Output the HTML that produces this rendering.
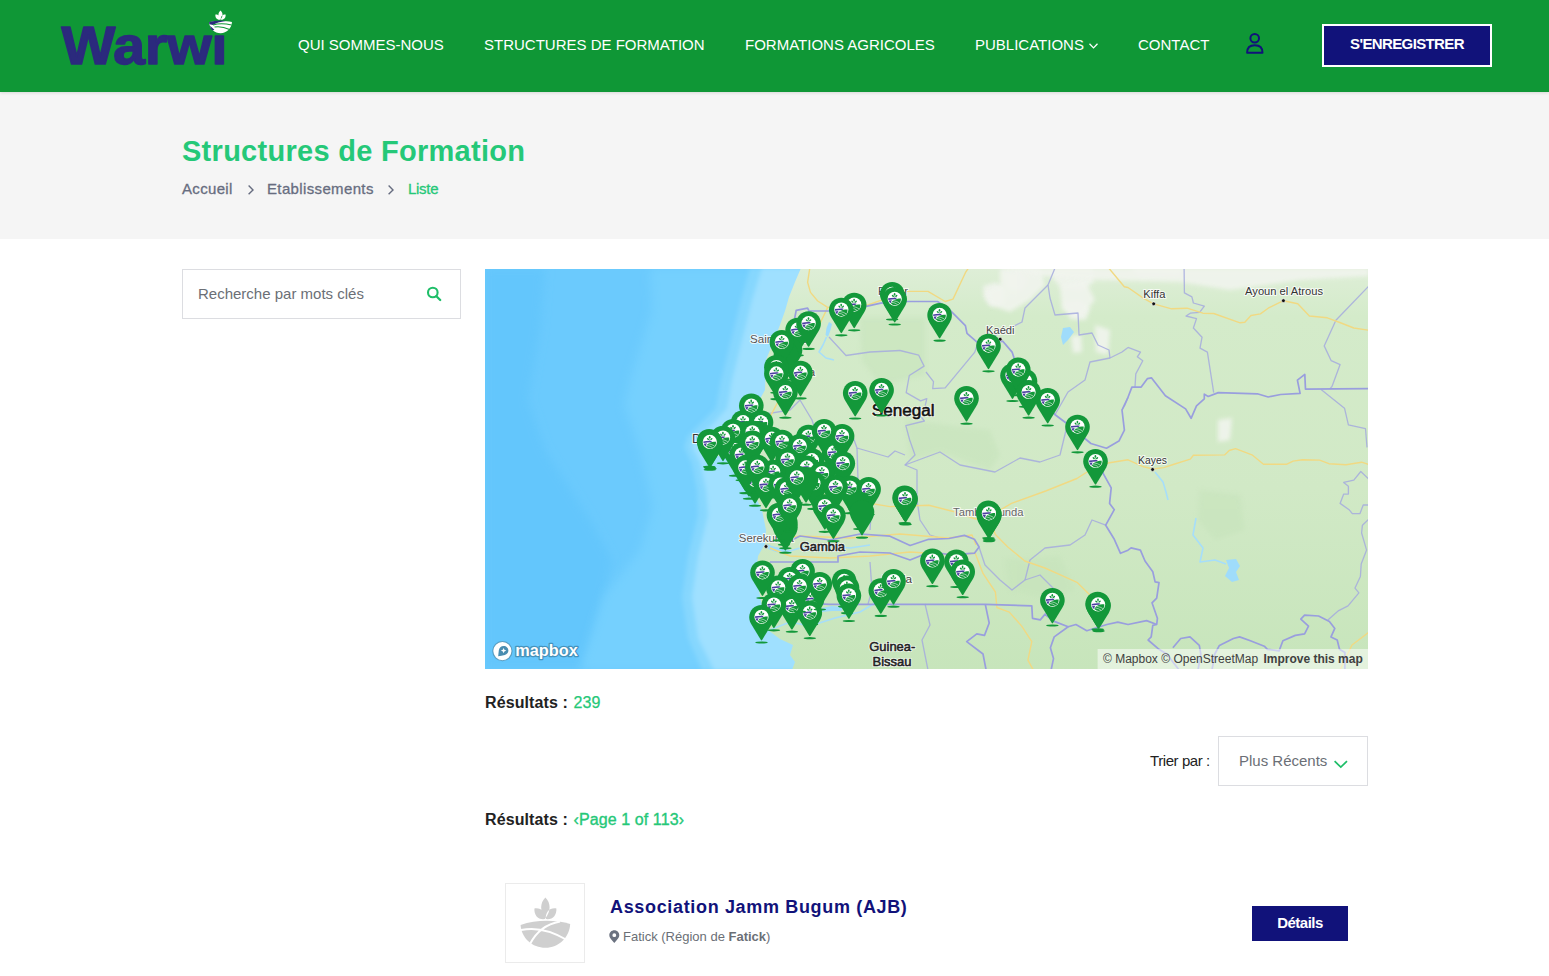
<!DOCTYPE html>
<html lang="fr">
<head>
<meta charset="utf-8">
<title>Structures de Formation - Warwi</title>
<style>
*{box-sizing:border-box;margin:0;padding:0}
html,body{width:1549px;height:976px;overflow:hidden;background:#fff}
body{font-family:"Liberation Sans",Arial,sans-serif;color:#333;position:relative}
.abs{position:absolute;white-space:nowrap}
#header{position:absolute;left:0;top:0;width:1549px;height:92px;background:#0f9736;box-shadow:0 1px 3px rgba(0,0,0,.12);z-index:5}
.nav{position:absolute;top:35.5px;font-size:15px;line-height:18px;color:#fff;text-transform:uppercase;white-space:nowrap}
#reg{position:absolute;left:1322px;top:24px;width:170px;height:43px;border:2px solid #fff;background:#11127a;color:#fff;font-weight:bold;font-size:15px;line-height:36px;text-align:center;letter-spacing:-.62px}
#crumb{position:absolute;left:0;top:92px;width:1549px;height:147px;background:#f5f5f5}
#title{left:182px;top:133px;font-size:29px;line-height:36px;font-weight:bold;color:#25c878;letter-spacing:.28px}
.bc{top:179px;font-size:15px;line-height:20px;color:#676d80;-webkit-text-stroke:.3px currentColor}
#search{position:absolute;left:182px;top:269px;width:279px;height:50px;border:1px solid #dcdde1;background:#fff}
#search span{position:absolute;left:15px;top:15px;font-size:15px;line-height:18px;color:#6b6f76}
#map{position:absolute;left:485px;top:269px;width:883px;height:400px;overflow:hidden;background:#cfe9c4}
.h5{font-weight:bold;font-size:16px;line-height:20px;color:#222}
.grn{color:#25c878}
#sort{position:absolute;left:1218px;top:736px;width:150px;height:50px;border:1px solid #dcdde1;background:#fff}
#thumb{position:absolute;left:505px;top:883px;width:80px;height:80px;border:1px solid #ebebeb;background:#fff}
#det{position:absolute;left:1252px;top:906px;width:96px;height:35px;background:#11127a;color:#fff;font-weight:bold;font-size:15px;line-height:33px;text-align:center;letter-spacing:-.5px}
</style>
</head>
<body>
<div id="header">
  <svg id="logo" class="abs" style="left:55px;top:5px" width="185" height="70" viewBox="55 5 185 70">
<text x="61.5" y="63.8" font-family="'Liberation Sans',Arial,sans-serif" font-weight="bold" font-size="54" textLength="166" lengthAdjust="spacingAndGlyphs" fill="#2b2a7d" stroke="#2b2a7d" stroke-width="1.6" stroke-linejoin="round">Warwi</text>
<rect x="207" y="8" width="28" height="26.5" fill="#0f9736"/>
<path d="M220.5,10.4 C223.2,12.6 223.2,16.4 220.5,19.4 C217.8,16.4 217.8,12.6 220.5,10.4Z M215.4,14.6 C218.6,14.2 220.4,16.6 220.2,19.8 C217,20.2 215,17.8 215.4,14.6Z M225.6,14.6 C222.4,14.2 220.6,16.6 220.8,19.8 C224,20.2 226,17.8 225.6,14.6Z" fill="#fff"/>
<path d="M209,22.2 C216,20.6 225,20.6 232,22 C231.6,28.4 226.6,33.2 220.6,33.2 C214.6,33.2 209.6,28.6 209,22.2Z" fill="#fff"/>
<path d="M209,22.2 C214,20.8 220,20.6 226,21 C220,21.8 215.6,23 213,25 L209.4,24.2Z M210,25.8 L214.4,29.8 L212.6,30.6 C211.2,29.2 210.4,27.6 210,25.8Z" fill="#2b2a7d"/>
<path d="M213,25 C218,23.4 225,23.4 231.6,25 M214.5,27 C220,26 225,27.4 229.6,29.6" stroke="#0f9736" stroke-width="1.1" fill="none"/>
</svg>
  <div class="nav" style="left:298px">Qui sommes-nous</div>
  <div class="nav" style="left:484px">Structures de Formation</div>
  <div class="nav" style="left:745px">Formations Agricoles</div>
  <div class="nav" style="left:975px">Publications</div>
  <div class="nav" style="left:1138px">Contact</div>
  <svg class="abs" style="left:1086px;top:40px" width="16" height="12" viewBox="0 0 16 12"><path d="M3.5,3.8 L7.5,7.9 L11.5,3.8" fill="none" stroke="#fff" stroke-width="1.3"/></svg>
<svg class="abs" style="left:1244px;top:31px" width="22" height="25" viewBox="0 0 22 25"><circle cx="10.7" cy="7.2" r="4.3" fill="none" stroke="#11127a" stroke-width="2"/><path d="M3.1,21.7 C3.1,16.8 6.2,14.3 10.8,14.3 C15.4,14.3 18.5,16.8 18.5,21.7Z" fill="none" stroke="#11127a" stroke-width="2" stroke-linejoin="round"/></svg>
<div id="reg">S'ENREGISTRER</div>
</div>
<div id="crumb"></div>
<div id="title" class="abs">Structures de Formation</div>
<div class="abs bc" style="left:182px;letter-spacing:.32px">Accueil</div>
<div class="abs bc" style="left:267px;letter-spacing:.36px">Etablissements</div>
<div class="abs bc grn" style="left:408px;letter-spacing:-.3px">Liste</div>
<svg class="abs" style="left:246px;top:183px" width="10" height="14" viewBox="0 0 10 14"><path d="M2.6,2.6 L7,6.9 L2.6,11.2" fill="none" stroke="#676d80" stroke-width="1.4"/></svg>
<svg class="abs" style="left:386px;top:183px" width="10" height="14" viewBox="0 0 10 14"><path d="M2.6,2.6 L7,6.9 L2.6,11.2" fill="none" stroke="#676d80" stroke-width="1.4"/></svg>
<div id="search"><span>Recherche par mots clés</span><svg class="abs" style="left:240px;top:14px" width="22" height="22" viewBox="0 0 22 22"><circle cx="9.8" cy="8.5" r="4.8" fill="none" stroke="#1ebe68" stroke-width="2.1"/><path d="M13.4,12.2 L17.2,16" stroke="#1ebe68" stroke-width="2.3" stroke-linecap="round"/></svg></div>
<div id="map"><!--MAP--><svg width="883" height="400" viewBox="0 0 883 400" style="display:block">
<defs>
<filter id="bl" x="-20%" y="-20%" width="140%" height="140%"><feGaussianBlur stdDeviation="5"/></filter>
<filter id="bl2" x="-20%" y="-20%" width="140%" height="140%"><feGaussianBlur stdDeviation="2"/></filter>
<linearGradient id="lg" x1="0" y1="0" x2="0" y2="1"><stop offset="0" stop-color="#deeed7"/><stop offset=".12" stop-color="#d4ebca"/><stop offset=".55" stop-color="#d1e9c6"/><stop offset="1" stop-color="#c7e5bb"/></linearGradient>
<clipPath id="landclip"><path d="M316.0,-1.0 L310.0,13.0 L304.0,28.0 L300.0,42.0 L295.0,56.0 L287.0,76.0 L281.0,91.0 L280.0,121.0 L270.0,139.0 L250.0,156.0 L227.0,171.0 L213.0,177.0 L220.0,183.0 L240.0,189.0 L257.0,201.0 L267.0,221.0 L277.0,241.0 L281.0,261.0 L280.0,275.0 L273.0,287.0 L271.0,306.0 L275.0,327.0 L279.0,346.0 L283.0,361.0 L295.0,370.0 L308.0,376.0 L305.0,386.0 L310.0,393.0 L307.0,401.0 L884.0,401.0 L884.0,-1.0Z"/></clipPath>
<g id="pin">
<ellipse cx="0" cy="25.7" rx="6.2" ry="1.1" fill="#13983a"/>
<path d="M0,-11.9 C6.9,-11.9 12.3,-6.5 12.3,0.2 C12.3,3.2 11.3,5.6 9.9,8 L0.6,23.2 Q0,24 -0.6,23.2 L-9.9,8 C-11.3,5.6 -12.3,3.2 -12.3,0.2 C-12.3,-6.5 -6.9,-11.9 0,-11.9Z" fill="#13983a"/>
<circle cx="0" cy="0" r="7.1" fill="#fff"/>
<g fill="#13983a"><ellipse cx="-0.1" cy="-4.6" rx=".85" ry="1.3"/><ellipse cx="-1.8" cy="-2.9" rx="1.3" ry=".75" transform="rotate(42 -1.8 -2.9)"/><ellipse cx="1.6" cy="-2.9" rx="1.3" ry=".75" transform="rotate(-42 1.6 -2.9)"/><rect x="-0.3" y="-3.4" width=".4" height="2.2"/></g>
<path d="M-6.5,-0.5 C-3.6,-1.1 -0.8,-1.2 2.2,-1 L1.2,0.4 C-1.4,0.5 -3.8,0.8 -6.3,1.2Z M-6.1,1.8 L-2.8,1.4 C-3.5,2.4 -3.9,3.5 -4,4.5 C-5,3.9 -5.8,3 -6.1,1.8Z" fill="#4b3fa0"/>
<path d="M-3.7,4.6 C-2.6,2.4 -0.6,0.8 2,0.2 C3.4,-0.1 4.9,-0.2 6.2,-0.2 C6.5,2.4 5.2,4.9 2.8,6 C0.6,7 -2,6.4 -3.7,4.6Z" fill="#13983a"/>
<path d="M-1.4,1.9 C1,2.2 3.2,3 4.8,4.2 M-2.9,3.5 C-0.6,3.8 1.4,4.6 2.9,5.8" stroke="#fff" stroke-width=".55" fill="none"/>
</g>
<g id="pinb">
<ellipse cx="0" cy="25.7" rx="6.2" ry="1.1" fill="#13983a"/>
<path d="M0,-11.9 C6.9,-11.9 12.3,-6.5 12.3,0.2 C12.3,3.2 11.3,5.6 9.9,8 L0.6,23.2 Q0,24 -0.6,23.2 L-9.9,8 C-11.3,5.6 -12.3,3.2 -12.3,0.2 C-12.3,-6.5 -6.9,-11.9 0,-11.9Z" fill="#13983a"/>
</g>
</defs>
<rect width="883" height="400" fill="#6bcafd"/>
<path d="M0.0,-1.0 L60.0,-1.0 L55.0,61.0 L43.0,131.0 L60.0,181.0 L105.0,251.0 L127.0,291.0 L115.0,341.0 L100.0,401.0 L0.0,401.0Z" fill="#63c6fc" filter="url(#bl)"/>
<path d="M165.0,-1.0 L167.0,41.0 L145.0,111.0 L139.0,135.0 L155.0,181.0 L168.0,238.0 L155.0,281.0 L119.0,328.0 L105.0,371.0 L95.0,401.0 L515.0,401.0 L515.0,-1.0Z" fill="#75d0fe" filter="url(#bl)"/>
<path d="M265.0,-1.0 L256.0,31.0 L246.0,71.0 L236.0,111.0 L231.0,139.0 L217.0,153.0 L203.0,167.0 L199.0,178.0 L207.0,195.0 L212.0,221.0 L213.0,246.0 L203.0,287.0 L197.0,328.0 L203.0,369.0 L217.0,401.0 L515.0,401.0 L515.0,-1.0Z" fill="#86d7fe" filter="url(#bl2)"/>
<path d="M277.0,-1.0 L267.0,31.0 L257.0,71.0 L247.0,111.0 L242.0,139.0 L227.0,156.0 L211.0,169.0 L207.0,178.0 L215.0,193.0 L221.0,221.0 L223.0,246.0 L213.0,287.0 L207.0,328.0 L213.0,369.0 L229.0,401.0 L515.0,401.0 L515.0,-1.0Z" fill="#9fe0ff" filter="url(#bl2)"/>
<path d="M316.0,-1.0 L310.0,13.0 L304.0,28.0 L300.0,42.0 L295.0,56.0 L287.0,76.0 L281.0,91.0 L280.0,121.0 L270.0,139.0 L250.0,156.0 L227.0,171.0 L213.0,177.0 L220.0,183.0 L240.0,189.0 L257.0,201.0 L267.0,221.0 L277.0,241.0 L281.0,261.0 L280.0,275.0 L273.0,287.0 L271.0,306.0 L275.0,327.0 L279.0,346.0 L283.0,361.0 L295.0,370.0 L308.0,376.0 L305.0,386.0 L310.0,393.0 L307.0,401.0 L884.0,401.0 L884.0,-1.0Z" fill="url(#lg)"/>
<g clip-path="url(#landclip)">
<path d="M420.0,151.0 L505.0,161.0 L515.0,186.0 L505.0,201.0 L455.0,183.0 L425.0,191.0Z" fill="#c6e3bb" opacity=".55" filter="url(#bl2)"/>
<path d="M375.0,49.0 L440.0,49.0 L440.0,106.0 L395.0,116.0 L377.0,91.0Z" fill="#c6e3bb" opacity=".55" filter="url(#bl2)"/>
<path d="M715.0,221.0 L755.0,226.0 L760.0,261.0 L730.0,271.0 L713.0,251.0Z" fill="#c6e3bb" opacity=".55" filter="url(#bl2)"/>
<path d="M520.0,291.0 L575.0,287.0 L590.0,321.0 L565.0,331.0 L525.0,321.0Z" fill="#c6e3bb" opacity=".55" filter="url(#bl2)"/>
<path d="M498.0,17.0 L511.0,13.0 L520.0,21.0 L518.0,35.0 L505.0,37.0 L499.0,29.0Z" fill="#f1f4ee" opacity=".9" filter="url(#bl2)"/>
<path d="M520.0,4.0 L535.0,2.0 L542.0,11.0 L537.0,22.0 L523.0,20.0Z" fill="#f1f4ee" opacity=".9" filter="url(#bl2)"/>
<path d="M568.0,-1.0 L608.0,-1.0 L609.0,13.0 L595.0,22.0 L577.0,19.0 L569.0,11.0Z" fill="#f1f4ee" opacity=".9" filter="url(#bl2)"/>
<path d="M579.0,33.0 L595.0,31.0 L605.0,39.0 L601.0,51.0 L585.0,50.0Z" fill="#f1f4ee" opacity=".9" filter="url(#bl2)"/>
<path d="M586.0,67.0 L596.0,66.0 L597.0,83.0 L588.0,84.0Z" fill="#f1f4ee" opacity=".9" filter="url(#bl2)"/>
<path d="M645.0,-1.0 L700.0,-1.0 L695.0,7.0 L655.0,8.0Z" fill="#f1f4ee" opacity=".9" filter="url(#bl2)"/>
<path d="M515.0,-1.0 L515.0,16.0 L500.0,23.0 L505.0,36.0 L525.0,43.0 L545.0,31.0 L560.0,16.0 L555.0,-1.0Z" fill="#f1f4ee" opacity=".9" filter="url(#bl2)"/>
<path d="M575.0,16.0 L600.0,11.0 L610.0,31.0 L595.0,49.0 L577.0,41.0Z" fill="#f1f4ee" opacity=".9" filter="url(#bl2)"/>
<path d="M610.0,56.0 L625.0,61.0 L623.0,86.0 L611.0,83.0Z" fill="#f1f4ee" opacity=".9" filter="url(#bl2)"/>
<path d="M515.0,-1.0 L884.0,-1.0 L884.0,7.0 L815.0,11.0 L745.0,21.0 L695.0,13.0 L615.0,11.0 L555.0,7.0Z" fill="#f1f4ee" opacity=".9" filter="url(#bl2)"/>
<path d="M733.0,151.0 L747.0,149.0 L745.0,171.0 L733.0,173.0Z" fill="#f1f4ee" opacity=".9" filter="url(#bl2)"/>
</g>
<path d="M282.0,275.0 L287.0,277.0 L295.0,279.0 L305.0,281.0 L307.0,284.0 L299.0,284.5 L291.0,283.0 L283.0,280.0Z" fill="#9fdcfb"/>
<path d="M337.0,339.0 L347.0,337.0 L357.0,338.0 L357.0,342.0 L347.0,342.0 L337.0,343.0Z" fill="#9fdcfb"/>
<path d="M344.0,53.0 L347.0,55.0 L345.5,61.0 L343.0,68.0 L340.5,66.0 L341.5,59.0Z" fill="#9fdcfb"/>
<path d="M578.0,59.0 L585.0,58.0 L589.0,63.0 L583.0,71.0 L578.0,76.0 L576.0,68.0Z" fill="#9fdcfb"/>
<path d="M741.0,291.0 L751.0,290.0 L755.0,297.0 L751.0,303.0 L754.0,311.0 L747.0,313.0 L740.0,307.0 L744.0,299.0Z" fill="#9fdcfb"/>
<path d="M341.5,68.0 L338.0,76.0 L334.0,83.0 L341.0,89.0 L349.0,91.0" fill="none" stroke="#a6defa" stroke-width="1.6" stroke-linejoin="round"/>
<path d="M305.0,282.0 L315.0,279.0 L330.0,280.0 L345.0,277.0 L365.0,279.0 L385.0,276.0" fill="none" stroke="#a6defa" stroke-width="1.6" stroke-linejoin="round"/>
<path d="M285.0,361.0 L305.0,353.0 L325.0,357.0 L350.0,349.0 L375.0,343.0 L395.0,331.0" fill="none" stroke="#a6defa" stroke-width="1.6" stroke-linejoin="round"/>
<path d="M670.0,203.0 L678.0,213.0 L681.0,223.0 L683.0,231.0" fill="none" stroke="#a6defa" stroke-width="1.6" stroke-linejoin="round"/>
<path d="M711.0,249.0 L708.0,266.0 L718.0,279.0 L715.0,293.0 L730.0,291.0 L741.0,295.0" fill="none" stroke="#a6defa" stroke-width="1.6" stroke-linejoin="round"/>
<path d="M699.1,-1.0 L699.4,23.9 L706.9,27.8 L708.4,34.0 L719.3,37.2 L714.6,43.4 L705.3,44.2 L701.0,47.0 L711.5,49.6 L708.4,59.0 L717.0,68.3 L715.0,79.2 L722.4,83.1 L728.7,123.6" fill="none" stroke="#a4aade" stroke-width="1.3" stroke-linejoin="round" opacity=".85"/>
<path d="M643.0,78.4 L655.5,83.1 L652.3,87.8 L657.8,91.7 L650.8,104.9 L650.0,118.1" fill="none" stroke="#a4aade" stroke-width="1.3" stroke-linejoin="round" opacity=".85"/>
<path d="M884.0,16.9 L850.9,51.2 L839.2,76.9 L846.2,91.7 L855.1,95.6 L847.0,117.4 L844.7,120.2" fill="none" stroke="#a4aade" stroke-width="1.3" stroke-linejoin="round" opacity=".85"/>
<path d="M836.1,120.5 L859.5,139.2 L863.4,155.8 L880.5,159.7 L882.0,178.4" fill="none" stroke="#a4aade" stroke-width="1.3" stroke-linejoin="round" opacity=".85"/>
<path d="M884.0,210.3 L875.8,202.5 L868.8,211.1 L858.7,213.4 L863.4,217.3 L863.4,225.1 L858.7,225.1 L855.1,234.4 L864.1,240.7 L867.3,244.6 L875.0,244.6 L878.2,236.0 L884.0,236.0" fill="none" stroke="#a4aade" stroke-width="1.3" stroke-linejoin="round" opacity=".85"/>
<path d="M884.0,250.0 L877.4,256.2 L876.6,264.0 L881.6,281.1 L876.2,295.1 L875.4,307.5 L870.0,319.1 L873.9,323.8 L863.0,336.9 L853.7,341.6 L842.9,350.9" fill="none" stroke="#a4aade" stroke-width="1.3" stroke-linejoin="round" opacity=".85"/>
<path d="M570.0,-1.0 L563.0,16.0 L565.0,29.0 L570.0,46.0 L593.0,44.0 L594.0,66.0 L607.0,64.0 L613.0,76.0 L624.0,81.0 L625.0,89.0 L637.0,83.0 L643.0,78.4" fill="none" stroke="#a4aade" stroke-width="1.3" stroke-linejoin="round" opacity=".85"/>
<path d="M563.0,16.0 L540.0,39.0 L537.0,53.0 L515.0,64.0 L505.0,69.0" fill="none" stroke="#a4aade" stroke-width="1.3" stroke-linejoin="round" opacity=".85"/>
<path d="M625.0,89.0 L605.0,93.0 L600.0,111.0 L583.0,123.0 L570.0,145.7" fill="none" stroke="#a4aade" stroke-width="1.3" stroke-linejoin="round" opacity=".85"/>
<path d="M643.0,128.3 L640.0,136.0 L637.0,141.0" fill="none" stroke="#a4aade" stroke-width="1.3" stroke-linejoin="round" opacity=".85"/>
<path d="M415.0,81.5 L433.7,86.2 L439.1,97.1 L424.3,106.5 L421.2,123.6 L435.6,131.9 L441.8,129.6 L440.2,136.6" fill="none" stroke="#a4aade" stroke-width="1.3" stroke-linejoin="round" opacity=".85"/>
<path d="M492.9,73.8 L489.8,83.1 L460.2,118.9 L447.7,119.7 L448.5,112.7 L441.0,103.0" fill="none" stroke="#a4aade" stroke-width="1.3" stroke-linejoin="round" opacity=".85"/>
<path d="M436.3,148.2 L439.4,152.0 L420.8,156.7 L424.7,171.0 L430.0,186.0 L420.0,196.0 L432.0,201.0 L432.0,231.0" fill="none" stroke="#a4aade" stroke-width="1.3" stroke-linejoin="round" opacity=".85"/>
<path d="M344.0,68.0 L361.0,86.5 L385.0,83.0 L415.0,81.5" fill="none" stroke="#a4aade" stroke-width="1.3" stroke-linejoin="round" opacity=".85"/>
<path d="M420.0,196.0 L455.0,183.0 L475.0,196.0 L510.0,203.0 L535.0,189.0 L555.0,193.0 L575.0,186.0 L582.5,155.0" fill="none" stroke="#a4aade" stroke-width="1.3" stroke-linejoin="round" opacity=".85"/>
<path d="M432.0,231.0 L435.0,251.0 L445.0,266.0 L455.0,269.0" fill="none" stroke="#a4aade" stroke-width="1.3" stroke-linejoin="round" opacity=".85"/>
<path d="M368.0,168.0 L372.0,179.0 L403.0,188.0 L410.0,182.0 L420.0,186.0" fill="none" stroke="#a4aade" stroke-width="1.3" stroke-linejoin="round" opacity=".85"/>
<path d="M315.0,131.0 L327.0,151.0 L335.0,176.0 L353.0,171.0" fill="none" stroke="#a4aade" stroke-width="1.3" stroke-linejoin="round" opacity=".85"/>
<path d="M372.0,179.0 L373.0,211.0 L387.0,231.0 L385.0,261.0" fill="none" stroke="#a4aade" stroke-width="1.3" stroke-linejoin="round" opacity=".85"/>
<path d="M275.0,146.0 L305.0,141.0 L315.0,131.0" fill="none" stroke="#a4aade" stroke-width="1.3" stroke-linejoin="round" opacity=".85"/>
<path d="M494.0,278.0 L500.0,296.0 L515.0,311.0 L527.0,321.0 L540.0,311.0 L555.0,306.0 L570.0,321.0 L573.0,331.0 L559.9,345.4" fill="none" stroke="#a4aade" stroke-width="1.3" stroke-linejoin="round" opacity=".85"/>
<path d="M540.0,311.0 L545.0,291.0 L560.0,279.0 L585.0,276.0 L600.0,266.0 L607.0,251.0 L620.7,256.2" fill="none" stroke="#a4aade" stroke-width="1.3" stroke-linejoin="round" opacity=".85"/>
<path d="M440.0,335.0 L445.0,356.0 L437.0,371.0 L443.0,401.0" fill="none" stroke="#a4aade" stroke-width="1.3" stroke-linejoin="round" opacity=".85"/>
<path d="M385.0,293.0 L387.0,321.0 L383.0,335.0" fill="none" stroke="#a4aade" stroke-width="1.3" stroke-linejoin="round" opacity=".85"/>
<path d="M324.8,-1.0 L322.6,13.3 L325.5,23.4 L332.7,32.0 L342.7,38.4 L380.0,37.0 L395.8,31.3 L414.4,27.7 L415.0,22.4 L443.0,22.4 L460.2,32.5 L468.0,30.1 L480.4,3.7 L483.5,-1.0" fill="none" stroke="#f1d982" stroke-width="1.4" stroke-linejoin="round"/>
<path d="M342.7,38.4 L335.5,53.5 L315.0,76.0 L305.0,101.0 L294.0,131.0 L284.0,149.6 L265.0,171.0 L235.0,179.0" fill="none" stroke="#f1d982" stroke-width="1.4" stroke-linejoin="round"/>
<path d="M623.7,-1.0 L639.3,17.7 L643.0,18.5 L658.6,29.4 L668.7,34.8 L686.6,39.8 L702.2,39.2 L717.8,44.2 L728.7,44.5 L755.1,53.8 L759.8,53.2 L766.0,46.5 L775.4,44.9 L783.2,39.2 L798.4,31.7 L812.8,34.8 L824.4,47.0 L842.3,48.8 L854.8,53.5 L868.8,59.0 L884.0,61.3" fill="none" stroke="#f1d982" stroke-width="1.4" stroke-linejoin="round"/>
<path d="M265.0,201.0 L315.0,221.0 L365.0,231.0 L405.0,237.6 L443.9,236.3 L467.3,242.2 L490.7,250.0 L505.0,247.0 L526.5,234.4 L560.7,222.0 L591.9,209.5 L602.8,202.5 L623.0,194.0 L643.0,190.8 L658.6,197.8 L668.0,200.0 L678.8,198.6 L688.2,195.5 L705.3,190.1 L708.4,186.2 L739.6,185.9 L744.2,181.5 L750.5,179.6 L767.6,186.2 L778.5,195.2 L801.9,195.2 L808.1,192.1 L817.4,190.8 L834.6,191.1 L843.9,194.7 L861.0,195.8 L876.6,193.2 L884.0,195.5" fill="none" stroke="#f1d982" stroke-width="1.4" stroke-linejoin="round"/>
<path d="M505.0,251.0 L510.4,265.6 L522.8,278.0 L539.8,292.0 L559.9,299.0 L575.4,305.9 L592.5,313.7 L604.9,326.1" fill="none" stroke="#f1d982" stroke-width="1.4" stroke-linejoin="round"/>
<path d="M490.2,284.2 L498.0,304.4 L510.4,323.0 L511.9,338.5 L524.3,343.1 L536.7,357.1 L546.8,372.6 L542.9,391.2 L548.3,401.0" fill="none" stroke="#f1d982" stroke-width="1.4" stroke-linejoin="round"/>
<path d="M285.0,279.0 L305.0,287.0 L345.0,289.0 L385.0,287.0 L425.0,283.0 L467.0,285.8 L490.2,284.2" fill="none" stroke="#f1d982" stroke-width="1.4" stroke-linejoin="round"/>
<path d="M290.0,271.0 L315.0,267.0 L365.0,269.0 L415.0,265.0 L463.0,269.0 L487.0,266.0 L491.0,276.0" fill="none" stroke="#f1d982" stroke-width="1.4" stroke-linejoin="round"/>
<path d="M884.0,363.0 L867.0,376.0 L855.0,401.0" fill="none" stroke="#f1d982" stroke-width="1.4" stroke-linejoin="round"/>
<path d="M309.7,49.2 L311.2,41.3 L322.6,39.2 L324.0,42.0 L344.1,42.0 L380.0,37.7 L395.8,34.1 L421.2,32.5 L452.4,32.5 L461.7,37.9 L480.4,56.6 L482.0,64.4 L492.9,73.8 L517.8,72.2 L527.1,83.1 L530.2,92.4 L545.0,116.0 L560.0,133.0 L570.1,145.7 L582.5,155.0 L605.9,174.5 L621.5,179.2 L633.9,172.1 L639.4,161.2 L637.0,141.0 L643.0,128.3 L646.9,118.1 L656.2,118.1 L662.5,109.6 L666.4,108.8 L680.4,126.7 L700.6,139.9 L706.1,149.3 L711.5,136.8 L719.3,129.8 L719.3,125.1 L723.2,127.5 L733.3,123.6 L772.3,124.8 L783.2,128.0 L795.6,125.5 L815.1,124.4 L812.4,111.1 L819.8,105.4 L820.5,120.2 L884.0,119.7" fill="none" stroke="#999ede" stroke-width="1.7" stroke-linejoin="round"/>
<path d="M613.0,183.0 L618.4,204.9 L626.2,218.9 L624.6,234.4 L629.3,240.7 L620.7,256.2 L629.3,270.3 L635.5,284.3 L643.0,281.2 L646.1,278.8 L655.4,281.1 L660.0,292.0 L667.8,302.8 L670.1,312.9 L674.0,313.7 L671.7,329.2 L667.0,333.8 L672.4,349.3 L671.7,355.5 L667.8,356.3 L666.2,367.9 L663.1,371.0 L674.0,380.3 L681.7,385.0 L694.1,401.0" fill="none" stroke="#999ede" stroke-width="1.7" stroke-linejoin="round"/>
<path d="M671.7,355.5 L661.6,351.6 L643.0,355.5 L632.8,353.2 L621.9,355.5 L601.8,361.7 L590.9,355.5 L583.2,357.8 L569.2,352.4 L559.9,345.4 L555.3,350.9 L547.5,349.3 L546.8,336.9 L500.3,335.4 L405.0,335.4 L345.0,335.4 L315.0,334.0 L283.0,332.0" fill="none" stroke="#999ede" stroke-width="1.7" stroke-linejoin="round"/>
<path d="M500.3,335.4 L504.2,354.0 L499.5,366.4 L491.8,364.8 L481.7,372.6 L498.0,385.0 L501.1,401.0" fill="none" stroke="#999ede" stroke-width="1.7" stroke-linejoin="round"/>
<path d="M583.2,357.8 L569.2,367.9 L565.4,378.8 L568.5,389.6 L566.1,401.0" fill="none" stroke="#999ede" stroke-width="1.7" stroke-linejoin="round"/>
<path d="M687.9,378.8 L695.7,369.5 L705.0,367.9 L714.3,376.4 L715.8,385.0 L713.0,401.0" fill="none" stroke="#999ede" stroke-width="1.7" stroke-linejoin="round"/>
<path d="M727.0,401.0 L729.8,385.0 L734.4,376.4 L748.4,369.5 L754.6,367.9 L765.4,371.8 L779.3,377.2 L782.4,380.3 L794.1,381.9 L797.9,371.8 L810.3,366.4 L819.6,364.8 L823.5,357.1 L815.8,350.1 L819.6,346.2 L833.6,347.0 L844.4,352.4 L849.8,359.4 L846.0,367.9 L852.2,371.0 L854.5,380.3 L859.9,383.4 L859.9,401.0" fill="none" stroke="#999ede" stroke-width="1.7" stroke-linejoin="round"/>
<path d="M283.0,272.0 L305.0,272.0 L315.0,267.0 L345.0,271.0 L375.0,265.0 L405.0,267.2 L425.1,276.5 L443.7,270.3 L463.9,269.5 L479.4,266.4 L489.4,270.3 L494.1,278.0 L489.4,284.2 L467.0,285.8 L445.0,283.0 L425.0,291.0 L405.0,284.0 L375.0,283.0 L353.0,287.0 L353.0,293.0 L315.0,293.0 L285.0,293.0" fill="none" stroke="#999ede" stroke-width="1.7" stroke-linejoin="round"/>
<circle cx="668.7" cy="34.8" r="1.9" fill="#111" stroke="#fff" stroke-width=".6"/>
<circle cx="798.4" cy="31.7" r="1.9" fill="#111" stroke="#fff" stroke-width=".6"/>
<circle cx="515.2" cy="70.2" r="1.9" fill="#111" stroke="#fff" stroke-width=".6"/>
<circle cx="667.6" cy="200.5" r="1.9" fill="#111" stroke="#fff" stroke-width=".6"/>
<circle cx="281.0" cy="277.5" r="1.9" fill="#111" stroke="#fff" stroke-width=".6"/>
<g font-family="'Liberation Sans',Arial,sans-serif" stroke-linejoin="round">
<text x="386.8" y="147.3" font-size="16" textLength="62.7" lengthAdjust="spacingAndGlyphs" fill="#fff" fill-opacity=".6" stroke="#fff" stroke-opacity=".75" stroke-width="2.2">Senegal</text>
<text x="386.8" y="147.3" font-size="16" textLength="62.7" lengthAdjust="spacingAndGlyphs" fill="#111" stroke="#111" stroke-width="0.55">Senegal</text>
<text x="314.7" y="281.8" font-size="13" textLength="45.3" lengthAdjust="spacingAndGlyphs" fill="#fff" fill-opacity=".6" stroke="#fff" stroke-opacity=".75" stroke-width="2.2">Gambia</text>
<text x="314.7" y="281.8" font-size="13" textLength="45.3" lengthAdjust="spacingAndGlyphs" fill="#222" stroke="#222" stroke-width="0.55">Gambia</text>
<text x="384.3" y="381.5" font-size="13" textLength="46" lengthAdjust="spacingAndGlyphs" fill="#fff" fill-opacity=".6" stroke="#fff" stroke-opacity=".75" stroke-width="2.2">Guinea-</text>
<text x="384.3" y="381.5" font-size="13" textLength="46" lengthAdjust="spacingAndGlyphs" fill="#222" stroke="#222" stroke-width="0.55">Guinea-</text>
<text x="387.5" y="396.5" font-size="13" textLength="39" lengthAdjust="spacingAndGlyphs" fill="#fff" fill-opacity=".6" stroke="#fff" stroke-opacity=".75" stroke-width="2.2">Bissau</text>
<text x="387.5" y="396.5" font-size="13" textLength="39" lengthAdjust="spacingAndGlyphs" fill="#222" stroke="#222" stroke-width="0.55">Bissau</text>
<text x="658.3" y="29.4" font-size="11.5" textLength="22.1" lengthAdjust="spacingAndGlyphs" fill="#fff" fill-opacity=".6" stroke="#fff" stroke-opacity=".75" stroke-width="2.2">Kiffa</text>
<text x="658.3" y="29.4" font-size="11.5" textLength="22.1" lengthAdjust="spacingAndGlyphs" fill="#333" stroke="#333" stroke-width="0">Kiffa</text>
<text x="760.1" y="26.3" font-size="11.5" textLength="77.9" lengthAdjust="spacingAndGlyphs" fill="#fff" fill-opacity=".6" stroke="#fff" stroke-opacity=".75" stroke-width="2.2">Ayoun el Atrous</text>
<text x="760.1" y="26.3" font-size="11.5" textLength="77.9" lengthAdjust="spacingAndGlyphs" fill="#333" stroke="#333" stroke-width="0">Ayoun el Atrous</text>
<text x="501.0" y="64.5" font-size="11.5" textLength="28.5" lengthAdjust="spacingAndGlyphs" fill="#fff" fill-opacity=".6" stroke="#fff" stroke-opacity=".75" stroke-width="2.2">Kaédi</text>
<text x="501.0" y="64.5" font-size="11.5" textLength="28.5" lengthAdjust="spacingAndGlyphs" fill="#444" stroke="#444" stroke-width="0">Kaédi</text>
<text x="653.1" y="194.7" font-size="11.5" textLength="28.8" lengthAdjust="spacingAndGlyphs" fill="#fff" fill-opacity=".6" stroke="#fff" stroke-opacity=".75" stroke-width="2.2">Kayes</text>
<text x="653.1" y="194.7" font-size="11.5" textLength="28.8" lengthAdjust="spacingAndGlyphs" fill="#333" stroke="#333" stroke-width="0">Kayes</text>
<text x="468.1" y="246.9" font-size="11.5" textLength="70.5" lengthAdjust="spacingAndGlyphs" fill="#fff" fill-opacity=".6" stroke="#fff" stroke-opacity=".75" stroke-width="2.2">Tambacounda</text>
<text x="468.1" y="246.9" font-size="11.5" textLength="70.5" lengthAdjust="spacingAndGlyphs" fill="#666" stroke="#666" stroke-width="0">Tambacounda</text>
<text x="253.8" y="272.5" font-size="11.5" textLength="55" lengthAdjust="spacingAndGlyphs" fill="#fff" fill-opacity=".6" stroke="#fff" stroke-opacity=".75" stroke-width="2.2">Serekunda</text>
<text x="253.8" y="272.5" font-size="11.5" textLength="55" lengthAdjust="spacingAndGlyphs" fill="#555" stroke="#555" stroke-width="0">Serekunda</text>
<text x="265.0" y="74.3" font-size="11.5" textLength="58" lengthAdjust="spacingAndGlyphs" fill="#fff" fill-opacity=".6" stroke="#fff" stroke-opacity=".75" stroke-width="2.2">Saint-Louis</text>
<text x="265.0" y="74.3" font-size="11.5" textLength="58" lengthAdjust="spacingAndGlyphs" fill="#555" stroke="#555" stroke-width="0">Saint-Louis</text>
<text x="207.0" y="174.0" font-size="12.5" textLength="34" lengthAdjust="spacingAndGlyphs" fill="#fff" fill-opacity=".6" stroke="#fff" stroke-opacity=".75" stroke-width="2.2">Dakar</text>
<text x="207.0" y="174.0" font-size="12.5" textLength="34" lengthAdjust="spacingAndGlyphs" fill="#333" stroke="#333" stroke-width="0">Dakar</text>
<text x="393.0" y="26.0" font-size="11.5" textLength="30" lengthAdjust="spacingAndGlyphs" fill="#fff" fill-opacity=".6" stroke="#fff" stroke-opacity=".75" stroke-width="2.2">Podor</text>
<text x="393.0" y="26.0" font-size="11.5" textLength="30" lengthAdjust="spacingAndGlyphs" fill="#444" stroke="#444" stroke-width="0">Podor</text>
<text x="301.0" y="106.5" font-size="11.5" textLength="29" lengthAdjust="spacingAndGlyphs" fill="#fff" fill-opacity=".6" stroke="#fff" stroke-opacity=".75" stroke-width="2.2">Louga</text>
<text x="301.0" y="106.5" font-size="11.5" textLength="29" lengthAdjust="spacingAndGlyphs" fill="#444" stroke="#444" stroke-width="0">Louga</text>
<text x="397.0" y="314.0" font-size="11.5" textLength="30" lengthAdjust="spacingAndGlyphs" fill="#fff" fill-opacity=".6" stroke="#fff" stroke-opacity=".75" stroke-width="2.2">Kolda</text>
<text x="397.0" y="314.0" font-size="11.5" textLength="30" lengthAdjust="spacingAndGlyphs" fill="#444" stroke="#444" stroke-width="0">Kolda</text>
</g>
<use href="#pin" x="407.2" y="24.8"/>
<use href="#pin" x="409.7" y="29.8"/>
<use href="#pin" x="369.2" y="35.6"/>
<use href="#pin" x="356.3" y="40.6"/>
<use href="#pin" x="454.6" y="45.9"/>
<use href="#pin" x="503.5" y="76.6"/>
<use href="#pin" x="312.6" y="60.7"/>
<use href="#pin" x="323.6" y="54.2"/>
<use href="#pinb" x="305.0" y="81.0"/>
<use href="#pinb" x="301.0" y="85.0"/>
<use href="#pin" x="296.8" y="72.9"/>
<use href="#pin" x="291.4" y="98.0"/>
<use href="#pin" x="291.4" y="104.4"/>
<use href="#pin" x="315.5" y="103.7"/>
<use href="#pin" x="300.4" y="123.0"/>
<use href="#pin" x="370.2" y="123.8"/>
<use href="#pin" x="396.6" y="120.8"/>
<use href="#pin" x="481.5" y="129.0"/>
<use href="#pin" x="527.5" y="106.3"/>
<use href="#pin" x="540.0" y="112.0"/>
<use href="#pin" x="533.3" y="100.5"/>
<use href="#pin" x="543.6" y="123.0"/>
<use href="#pin" x="562.7" y="130.8"/>
<use href="#pin" x="592.5" y="157.6"/>
<use href="#pin" x="610.5" y="192.0"/>
<use href="#pin" x="266.3" y="136.5"/>
<use href="#pin" x="258.1" y="153.2"/>
<use href="#pin" x="276.0" y="153.2"/>
<use href="#pinb" x="261.5" y="164.0"/>
<use href="#pinb" x="273.0" y="164.0"/>
<use href="#pin" x="267.4" y="163.3"/>
<use href="#pin" x="248.1" y="161.8"/>
<use href="#pin" x="250.0" y="181.0"/>
<use href="#pin" x="238.0" y="168.6"/>
<use href="#pinb" x="224.2" y="172.0"/>
<use href="#pinb" x="225.6" y="174.0"/>
<use href="#pinb" x="224.8" y="175.0"/>
<use href="#pin" x="224.8" y="172.9"/>
<use href="#pin" x="286.8" y="169.7"/>
<use href="#pin" x="256.7" y="185.5"/>
<use href="#pin" x="264.0" y="204.0"/>
<use href="#pin" x="270.0" y="211.0"/>
<use href="#pin" x="260.3" y="198.4"/>
<use href="#pin" x="267.4" y="173.3"/>
<use href="#pin" x="297.1" y="172.6"/>
<use href="#pin" x="323.4" y="167.6"/>
<use href="#pin" x="314.7" y="176.9"/>
<use href="#pin" x="349.2" y="183.3"/>
<use href="#pin" x="357.1" y="166.9"/>
<use href="#pin" x="339.1" y="161.8"/>
<use href="#pin" x="326.9" y="191.2"/>
<use href="#pin" x="321.9" y="198.4"/>
<use href="#pin" x="302.6" y="190.5"/>
<use href="#pin" x="288.2" y="202.7"/>
<use href="#pin" x="272.4" y="197.7"/>
<use href="#pin" x="357.8" y="194.1"/>
<use href="#pin" x="337.0" y="204.1"/>
<use href="#pin" x="328.4" y="214.2"/>
<use href="#pinb" x="321.0" y="210.0"/>
<use href="#pin" x="281.0" y="215.6"/>
<use href="#pin" x="295.4" y="215.6"/>
<use href="#pin" x="301.8" y="219.9"/>
<use href="#pin" x="311.9" y="208.4"/>
<use href="#pin" x="364.9" y="218.5"/>
<use href="#pin" x="350.6" y="217.8"/>
<use href="#pin" x="383.6" y="219.9"/>
<use href="#pinb" x="299.0" y="250.0"/>
<use href="#pinb" x="300.4" y="253.5"/>
<use href="#pinb" x="300.4" y="258.0"/>
<use href="#pin" x="294.0" y="245.7"/>
<use href="#pin" x="304.7" y="236.4"/>
<use href="#pin" x="339.8" y="237.1"/>
<use href="#pin" x="348.4" y="246.4"/>
<use href="#pinb" x="374.3" y="234.3"/>
<use href="#pinb" x="377.0" y="242.9"/>
<use href="#pinb" x="419.6" y="228.4"/>
<use href="#pinb" x="420.6" y="229.8"/>
<use href="#pin" x="420.1" y="229.0"/>
<use href="#pinb" x="503.3" y="243.4"/>
<use href="#pinb" x="504.5" y="245.4"/>
<use href="#pinb" x="503.9" y="246.4"/>
<use href="#pin" x="503.9" y="244.3"/>
<use href="#pin" x="317.6" y="301.9"/>
<use href="#pin" x="304.7" y="309.8"/>
<use href="#pin" x="293.2" y="318.4"/>
<use href="#pin" x="327.0" y="329.8"/>
<use href="#pin" x="306.9" y="337.0"/>
<use href="#pin" x="324.8" y="343.5"/>
<use href="#pin" x="277.5" y="303.3"/>
<use href="#pin" x="334.8" y="314.8"/>
<use href="#pin" x="314.7" y="316.9"/>
<use href="#pin" x="288.9" y="335.6"/>
<use href="#pin" x="276.5" y="347.8"/>
<use href="#pin" x="359.2" y="311.9"/>
<use href="#pin" x="362.0" y="318.4"/>
<use href="#pin" x="363.9" y="326.3"/>
<use href="#pin" x="395.8" y="321.2"/>
<use href="#pin" x="408.5" y="312.0"/>
<use href="#pin" x="447.4" y="291.5"/>
<use href="#pin" x="471.4" y="292.3"/>
<use href="#pin" x="477.7" y="302.5"/>
<use href="#pin" x="567.4" y="330.8"/>
<use href="#pinb" x="612.6" y="334.6"/>
<use href="#pinb" x="613.6" y="336.4"/>
<use href="#pin" x="613.1" y="335.4"/>
<g transform="translate(8,372)">
<circle cx="9.4" cy="10.1" r="9.6" fill="#fff" stroke="#3d85ab" stroke-opacity=".75" stroke-width="1.1"/>
<path d="M10.6,4.9 C13.4,4.9 15.4,7 15.4,9.6 C15.4,11.8 14,13.4 11.8,14 C9.6,14.6 7.2,14.8 5.2,15.2 C5.4,13.2 5.6,11.4 5.8,9.6 C6.1,6.8 8,4.9 10.6,4.9Z" fill="#4a8db0"/>
<path d="M10.6,6.9 L11.4,8.8 L13.3,9.6 L11.4,10.4 L10.6,12.3 L9.8,10.4 L7.9,9.6 L9.8,8.8Z" fill="#fff"/>
<text x="22.3" y="15.2" font-family="'Liberation Sans',Arial,sans-serif" font-weight="bold" font-size="17" textLength="62.5" lengthAdjust="spacingAndGlyphs" fill="#3d85ab" stroke="#3d85ab" stroke-opacity=".8" stroke-width="2.6" stroke-linejoin="round">mapbox</text>
<text x="22.3" y="15.2" font-family="'Liberation Sans',Arial,sans-serif" font-weight="bold" font-size="17" textLength="62.5" lengthAdjust="spacingAndGlyphs" fill="#fff">mapbox</text>
</g>
<rect x="612.6" y="380" width="270.4" height="20" fill="#fff" fill-opacity=".5"/>
<text x="618" y="394.4" font-family="'Liberation Sans',Arial,sans-serif" font-size="12" fill="#404040">© Mapbox © OpenStreetMap <tspan font-weight="bold" dx="2">Improve this map</tspan></text>
</svg><!--/MAP--></div>
<div class="abs h5" style="left:485px;top:693px;letter-spacing:.1px">Résultats : <span class="grn" style="font-weight:normal;margin-left:1px;-webkit-text-stroke:.25px #25c878">239</span></div>
<div class="abs" style="left:1150px;top:752px;font-size:15px;line-height:18px;color:#222;letter-spacing:-.42px">Trier par :</div>
<div id="sort"><span class="abs" style="left:20px;top:15px;font-size:15px;line-height:18px;color:#6b6f76">Plus Récents</span><svg class="abs" style="left:113px;top:21px" width="18" height="12" viewBox="0 0 18 12"><path d="M2.6,3.2 L8.8,9 L15,3.2" fill="none" stroke="#1ebe68" stroke-width="1.7"/></svg></div>
<div class="abs h5" style="left:485px;top:810px;letter-spacing:.1px">Résultats : <span class="grn" style="font-weight:normal;margin-left:1px;-webkit-text-stroke:.35px #25c878">&lsaquo;Page 1 of 113&rsaquo;</span></div>
<div id="thumb"><svg width="78" height="78" viewBox="506 884 78 78" style="display:block">
<g fill="#cfcfcf"><path d="M545.4,897.6 C551,903 551,911.6 545.4,918.2 C539.8,911.6 539.8,903 545.4,897.6Z M534.4,908.4 C541.4,907.4 545.4,912.4 545,919 C538,920 534,915 534.4,908.4Z M556.4,908.4 C549.4,907.4 545.4,912.4 545.8,919 C552.8,920 556.8,915 556.4,908.4Z"/>
<path d="M520.6,925 C536,919.6 555,919.6 570.2,924 C569.4,937.6 558.6,947.8 545.4,947.8 C532.2,947.8 521.4,938 520.6,925Z"/></g>
<path d="M521,930 C535,927 552,931 567,940 M530,944 C536,932 546,924 560,921.4" stroke="#fff" stroke-width="2" fill="none"/>
</svg></div>
<div class="abs" id="ttl" style="left:610px;top:895px;font-size:18px;line-height:24px;font-weight:bold;color:#11127a;letter-spacing:.66px">Association Jamm Bugum (AJB)</div>
<div class="abs" id="loc" style="left:623px;top:929px;font-size:13px;line-height:16px;color:#6b6f76">Fatick (Région de <b>Fatick</b>)</div>
<svg class="abs" style="left:609px;top:930px" width="11" height="14" viewBox="0 0 11 14"><path d="M5.3,0.3 C8.1,0.3 10.3,2.5 10.3,5.2 C10.3,7.4 8.6,9.4 5.3,12.9 C2,9.4 0.3,7.4 0.3,5.2 C0.3,2.5 2.5,0.3 5.3,0.3Z M5.3,3.3 A1.9,1.9 0 1 0 5.3,7.1 A1.9,1.9 0 1 0 5.3,3.3Z" fill="#6b7280" fill-rule="evenodd"/></svg>
<div id="det">Détails</div>
</body>
</html>
